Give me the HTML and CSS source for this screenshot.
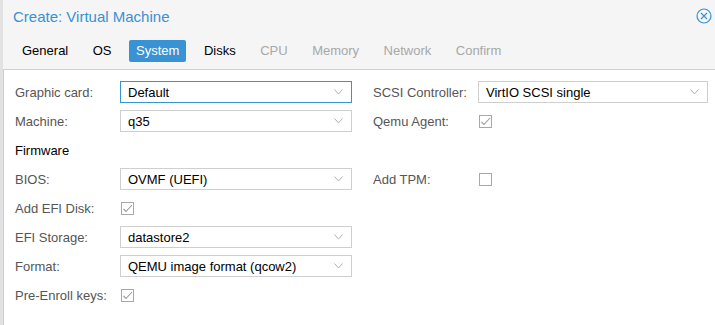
FILE: index.html
```html
<!DOCTYPE html>
<html lang="en">

<head>
  <meta charset="UTF-8" />
  <title>Create: Virtual Machine</title>
  <link rel="stylesheet" href="styles.css">
</head>

<body>
  <div class="window">
    <div class="header">
      <div class="title-row">
        <span class="title">Create: Virtual Machine</span>
        <svg class="close" width="16" height="16" viewBox="0 0 16 16">
          <circle cx="8" cy="8" r="7" fill="none" stroke="#3892d4" stroke-width="1.2" />
          <path d="M5 5 L11 11 M11 5 L5 11" stroke="#3892d4" stroke-width="1.2" />
        </svg>
      </div>
      <div class="tabbar">
        <span class="tab">General</span>
        <span class="tab">OS</span>
        <span class="tab active">System</span>
        <span class="tab">Disks</span>
        <span class="tab disabled">CPU</span>
        <span class="tab disabled">Memory</span>
        <span class="tab disabled">Network</span>
        <span class="tab disabled">Confirm</span>
      </div>
    </div>

    <div class="body">
      <div class="column left">
        <div class="row">
          <label>Graphic card:</label>
          <div class="combo focused"><span>Default</span><svg class="arrow" width="9" height="6" viewBox="0 0 9 6"><path d="M0.5 0.5 L4.5 5 L8.5 0.5" fill="none" stroke="#b0b0b0" /></svg></div>
        </div>
        <div class="row">
          <label>Machine:</label>
          <div class="combo"><span>q35</span><svg class="arrow" width="9" height="6" viewBox="0 0 9 6"><path d="M0.5 0.5 L4.5 5 L8.5 0.5" fill="none" stroke="#b0b0b0" /></svg></div>
        </div>
        <div class="row">
          <span class="section">Firmware</span>
        </div>
        <div class="row">
          <label>BIOS:</label>
          <div class="combo"><span>OVMF (UEFI)</span><svg class="arrow" width="9" height="6" viewBox="0 0 9 6"><path d="M0.5 0.5 L4.5 5 L8.5 0.5" fill="none" stroke="#b0b0b0" /></svg></div>
        </div>
        <div class="row">
          <label>Add EFI Disk:</label>
          <span class="check"><svg width="13" height="13" viewBox="0 0 13 13"><path d="M2.5 7 L5 9.5 L11 3" fill="none" stroke="#9a9a9a" stroke-width="1.1" /></svg></span>
        </div>
        <div class="row">
          <label>EFI Storage:</label>
          <div class="combo"><span>datastore2</span><svg class="arrow" width="9" height="6" viewBox="0 0 9 6"><path d="M0.5 0.5 L4.5 5 L8.5 0.5" fill="none" stroke="#b0b0b0" /></svg></div>
        </div>
        <div class="row">
          <label>Format:</label>
          <div class="combo"><span>QEMU image format (qcow2)</span><svg class="arrow" width="9" height="6" viewBox="0 0 9 6"><path d="M0.5 0.5 L4.5 5 L8.5 0.5" fill="none" stroke="#b0b0b0" /></svg></div>
        </div>
        <div class="row">
          <label>Pre-Enroll keys:</label>
          <span class="check"><svg width="13" height="13" viewBox="0 0 13 13"><path d="M2.5 7 L5 9.5 L11 3" fill="none" stroke="#9a9a9a" stroke-width="1.1" /></svg></span>
        </div>
      </div>

      <div class="column right">
        <div class="row">
          <label>SCSI Controller:</label>
          <div class="combo"><span>VirtIO SCSI single</span><svg class="arrow" width="9" height="6" viewBox="0 0 9 6"><path d="M0.5 0.5 L4.5 5 L8.5 0.5" fill="none" stroke="#b0b0b0" /></svg></div>
        </div>
        <div class="row">
          <label>Qemu Agent:</label>
          <span class="check"><svg width="13" height="13" viewBox="0 0 13 13"><path d="M2.5 7 L5 9.5 L11 3" fill="none" stroke="#9a9a9a" stroke-width="1.1" /></svg></span>
        </div>
        <div class="row"></div>
        <div class="row">
          <label>Add TPM:</label>
          <span class="check"></span>
        </div>
      </div>
    </div>
  </div>
</body>

</html>
```

FILE: styles.css
```css
body {
  margin: 0;
  font-family: "Liberation Sans", Arial, sans-serif;
  font-size: 13px;
  background: white;
}

.window {
  height: 325px;
  border-left: 3px solid #e2e2e2;
  box-sizing: border-box;
}

.header {
  background: #f5f5f5;
  border-bottom: 1px solid #cfcfcf;
}

.title-row {
  display: flex;
  align-items: center;
  justify-content: space-between;
  height: 32px;
  padding: 0 3px 0 10px;
}

.title {
  color: #3892d4;
  font-size: 15px;
}

.tabbar {
  display: flex;
  gap: 10.5px;
  padding: 8px 12px 7px;
}

.tab {
  height: 22px;
  line-height: 22px;
  padding: 0 7px;
  border-radius: 2px;
  color: #000;
}

.tab.active {
  background: #3892d4;
  color: white;
}

.tab.disabled {
  color: #a8a8a8;
}

.body {
  display: flex;
  gap: 21px;
  padding: 11px 0 0 11px;
  border-left: 1px solid #cfcfcf;
  height: 255px;
}

.column.left {
  width: 337px;
}

.column.right {
  width: 335px;
}

.row {
  display: flex;
  align-items: center;
  height: 22px;
  margin-bottom: 7px;
}

.row label {
  color: #555;
  width: 105px;
  flex: none;
}

.section {
  color: #000;
}

.combo {
  flex: 1;
  display: flex;
  align-items: center;
  justify-content: space-between;
  height: 22px;
  box-sizing: border-box;
  border: 1px solid #cfcfcf;
  padding: 0 8px 0 7px;
  background: white;
  color: #000;
}

.combo.focused {
  border-color: #3892d4;
}

.check {
  width: 13px;
  height: 13px;
  box-sizing: border-box;
  border: 1px solid #a8a8a8;
  margin-left: 1px;
  display: flex;
  align-items: center;
  justify-content: center;
}

.check svg {
  flex: none;
}
```
